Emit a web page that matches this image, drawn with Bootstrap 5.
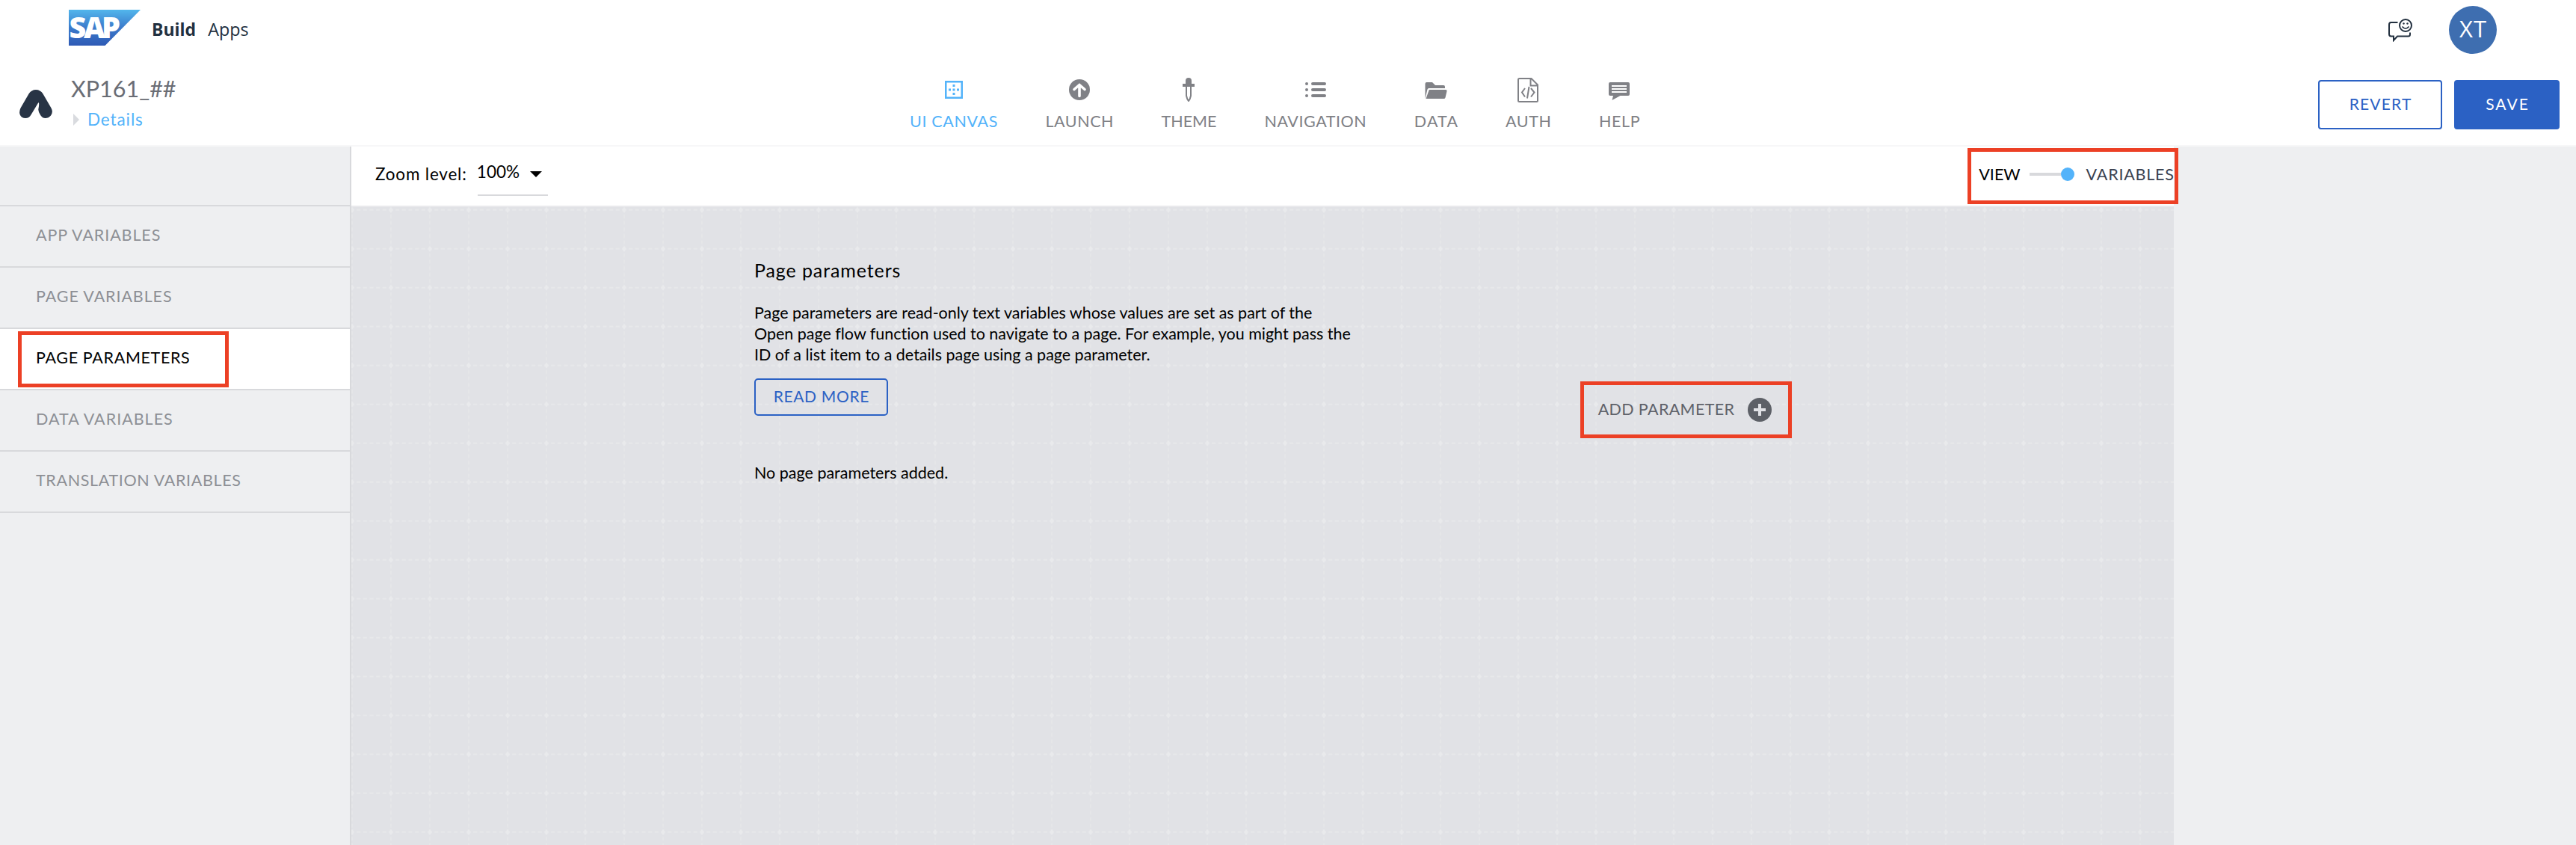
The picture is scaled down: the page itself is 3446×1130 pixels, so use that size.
<!DOCTYPE html>
<html lang="en">
<head>
<meta charset="utf-8">
<title>XP161_## - SAP Build Apps</title>
<link href="https://cdn.jsdelivr.net/npm/bootstrap@5.3.0/dist/css/bootstrap.min.css" rel="stylesheet">
<style>
  :root { --blue:#2b61c4; --sky:#53b3fa; --line:#d8d9dc; --panel:#eeeff1; --red:#ec4025; --ink:#22303f; }
  body { font-family: Lato, "Open Sans", sans-serif; font-size: 21.5px; line-height: 28px; color:#000; width:3446px; height:1130px; overflow:hidden; background:#fff; }
  svg { display:block; flex:none; }
  .t { white-space:nowrap; display:inline-block; letter-spacing:var(--ls,0); margin-right:calc(-1 * var(--ls,0px)); }
  .ls2 { --ls:.2px; } .ls4 { --ls:.35px; } .ls6 { --ls:.55px; } .ls7 { --ls:.65px; } .ls8 { --ls:.8px; } .ls9 { --ls:.9px; } .ls11 { --ls:1px; } .ls13 { --ls:1.2px; } .ls24 { --ls:2px; }
  .shellbar { height:80px; padding:0 106px 0 92px; color:var(--ink); font-family:"Open Sans", sans-serif; }
  .shellbar .logo { margin-top:-6px; overflow:visible; }
  .shellbar .product { font-size:23.3px; margin:0 0 2px 16px; }
  .shellbar .product.fw-bold { margin-left:15px; font-size:23px; }
  .avatar { width:64px; height:64px; background:#3e6eb0; font-size:31px; margin-left:48px; }
  .appbar { height:116px; border-bottom:2px solid #f7f7f8; padding-right:22px; }
  .brand { width:1217px; padding:0 0 0 26px; }
  .brand .mk { margin-top:40px; }
  .brand .names { margin:20px 0 0 25px; }
  .app-title { font-size:30.5px; line-height:36px; color:#6a6d75; }
  .details { font-size:22.5px; color:var(--sky); margin-top:10px; gap:11px; padding-left:3px; }
  .tools { gap:64px; padding-top:24px; }
  .tools a { color:#808186; text-decoration:none; }
  .tools a.on { color:var(--sky); }
  .tools .t { margin-top:12px; }
  .tools .tall { margin-bottom:-2px; }
  .acts { gap:16px; padding-top:27px; }
  .cta { --bs-btn-font-size:21px; --bs-btn-border-width:2px; --bs-btn-border-radius:4px; --bs-btn-padding-x:0; --bs-btn-padding-y:0; --bs-btn-color:var(--blue); --bs-btn-border-color:var(--blue); height:66px; width:166px; padding-bottom:2px; }
  .cta.fill { --bs-btn-color:#fff; --bs-btn-bg:var(--blue); width:141px; }
  .cta.more { height:50px; width:179px; --bs-btn-border-radius:5px; }
  .work { height:934px; }
  .side { width:470px; background:var(--panel); border-right:2px solid var(--line); }
  .side .blank { height:80px; border-bottom:2px solid var(--line); }
  .side .vitem { height:82px; border-bottom:2px solid var(--line); padding:0 0 4px 48px; color:#8d8f95; position:relative; }
  .side .vitem.on { background:#fff; color:#000; }
  .hot { position:absolute; border:5px solid var(--red); pointer-events:none; }
  .hot.h-side { left:24px; top:3px; width:282px; height:75px; }
  .hot.h-view { left:2162px; top:2px; width:282px; height:75px; z-index:2; }
  .hot.h-add { left:-24px; top:-22px; width:283px; height:76px; }
  .stagecol { width:2438px; position:relative; }
  .zoombar { height:80px; background:#fff; border-bottom:2px solid #f7f7f8; padding:0 0 4px 32px; font-size:22.5px; }
  .zoomsel { width:94px; height:66px; border-bottom:2px solid var(--line); margin-left:15px; padding-top:20px; }
  .zoomsel .t { margin-left:-1px; }
  .zoomsel svg { margin:13px 0 0 14px; }
  .mode { font-size:21.5px; }
  .track { width:42px; height:4px; background:var(--line); margin-left:12px; }
  .knob { width:18px; height:18px; background:var(--sky); margin-right:16px; }
  .mode .off { color:#3a4150; }
  .surface { height:854px; background:#e1e2e6; position:relative; }
  .surface .gridbg { position:absolute; inset:0; }
  .content { position:relative; width:1361px; margin-left:539px; padding-top:70px; }
  .content h1 { font-size:25px; line-height:30px; margin:0 0 28px; font-weight:400; }
  .content .para { letter-spacing:-.02px; }
  .content .actions { margin-top:18px; }
  .content p { margin:0; }
  .content p.none { margin-top:54px; }
  .add { color:#5f626a; gap:18px; height:32px; position:relative; margin-top:26px; }
  .add .t { padding-bottom:2px; }
  .rest { background:var(--panel); }
</style>
</head>
<body>
<header>
  <div class="shellbar d-flex align-items-center">
    <svg class="logo" width="96" height="48" viewBox="0 0 96 48">
      <defs><linearGradient id="sg" x1="0" y1="0" x2="0" y2="1"><stop offset="0" stop-color="#52b6ec"/><stop offset=".5" stop-color="#3b7bcb"/><stop offset="1" stop-color="#2e5ab5"/></linearGradient></defs>
      <path d="M0 0H96L48.500 48H0Z" fill="url(#sg)"/>
      <text x="0.500 20 44" y="38" font-family="Open Sans" font-weight="800" font-size="39.500" fill="#fff">SAP</text>
    </svg>
    <span class="product t fw-bold">Build</span>
    <span class="product t">Apps</span>
    <svg class="ms-auto" width="34" height="32" viewBox="0 0 34 32" fill="none" stroke="#22303f" stroke-width="2">
      <path d="M13.500 6H4.500Q2 6 2 9V21.500Q2 24.500 4.500 24.500H8V30L13 24.500H27.500Q30 24.500 30 22V19.500"/>
      <circle cx="24" cy="10" r="8"/><path d="M19.500 11.500Q24 17 28.500 11.500" stroke-width="1.700"/><circle cx="21.500" cy="7.500" r="1.200" fill="#22303f" stroke="none"/><circle cx="26.500" cy="7.500" r="1.200" fill="#22303f" stroke="none"/>
    </svg>
    <div class="avatar rounded-circle text-white d-flex align-items-center justify-content-center"><span class="t ls13 pb-1">XT</span></div>
  </div>

  <div class="appbar d-flex">
    <div class="brand d-flex">
      <svg class="mk" width="44" height="38" viewBox="0 0 44 38"><path d="M22 0Q28 0 31.500 5.500L42.500 24.500Q45.500 30 42 34.500Q39 38 34.500 38Q31 38 28.500 34.500Q24.500 29 25.500 25Q26.500 20 26 17.500Q25.500 17 25 17.800L15.500 33.500Q13 38 8 38Q3 38 1 34Q-1 30 1.500 24.500L12.500 5.500Q16 0 22 0Z" fill="#283445"/></svg>
      <div class="names">
        <div class="app-title"><span class="t">XP161_##</span></div>
        <div class="details d-flex align-items-center"><svg width="8" height="16"><path d="M0 0L8 8L0 16Z" fill="#d9dbdf"/></svg><span class="t ls9">Details</span></div>
      </div>
    </div>
    <nav class="tools d-flex">
      <a class="on d-flex flex-column align-items-center"><svg width="32" height="32" fill="currentColor"><path fill-rule="evenodd" d="M4 4H28V28H4ZM6.500 6.500V25.500H25.500V6.500Z"/><path d="M14.500 9h3v3h-3zM14.500 14.500h3v3h-3zM14.500 20h3v3h-3zM9 14.500h3v3h-3zM20 14.500h3v3h-3z"/></svg><span class="t ls7">UI CANVAS</span></a>
      <a class="d-flex flex-column align-items-center"><svg width="32" height="32"><circle cx="16" cy="16" r="14" fill="currentColor"/><path d="M16 24.500V10M9 15.500L16 9.500L23 15.500" fill="none" stroke="#fff" stroke-width="3.600" stroke-linecap="round"/></svg><span class="t ls6">LAUNCH</span></a>
      <a class="d-flex flex-column align-items-center"><svg width="32" height="32"><path d="M12 8V4Q12 0 16 0Q20 0 20 4V8H24V12H8V8Z" fill="currentColor"/><path d="M13 11V24Q14 29 16 31Q18 29 19 24V11" fill="none" stroke="currentColor" stroke-width="2"/></svg><span class="t">THEME</span></a>
      <a class="d-flex flex-column align-items-center"><svg width="32" height="32" stroke="currentColor" stroke-width="4" stroke-linecap="round"><path d="M4 8h.01M4 16h.01M4 24h.01M12 8H28M12 16H28M12 24H28"/></svg><span class="t ls6">NAVIGATION</span></a>
      <a class="d-flex flex-column align-items-center"><svg width="32" height="32" fill="currentColor"><path d="M1.500 28V8Q1.500 6 3.500 6H11L15 10H26Q28 10 28 12V14H6.500Q5 14 4.500 15.500Z"/><path d="M6.800 16H29Q31 16 30.500 18L28.500 26.500Q28 28 26.500 28H2.500Z"/></svg><span class="t ls13">DATA</span></a>
      <a class="d-flex flex-column align-items-center"><svg class="tall" width="32" height="34" fill="none" stroke="currentColor" stroke-width="2"><path d="M3 2.500Q3 1 4.500 1H20.500L29 9.500V30.500Q29 32 27.500 32H4.500Q3 32 3 30.500ZM19.500 1V10.500H29"/><path d="M12 14L8 19.500L12 25.500M20 14L24.500 19.500L20 25.500M17.500 12L15 27.500"/></svg><span class="t ls6">AUTH</span></a>
      <a class="d-flex flex-column align-items-center"><svg width="32" height="32"><path d="M4 6H28Q30 6 30 8V22Q30 24 28 24H17.500L6.500 30L8 24H4Q2 24 2 22V8Q2 6 4 6Z" fill="currentColor"/><path d="M6 11H26M6 15H26M6 19H26" stroke="#fff" stroke-width="2"/></svg><span class="t ls7">HELP</span></a>
    </nav>
    <div class="acts d-flex ms-auto">
      <button class="btn cta"><span class="t ls13">REVERT</span></button>
      <button class="btn cta fill"><span class="t ls24">SAVE</span></button>
    </div>
  </div>
</header>

<main class="work d-flex">
  <aside class="side flex-shrink-0">
    <div class="blank"></div>
    <div class="vitem d-flex align-items-center"><span class="t ls9">APP VARIABLES</span></div>
    <div class="vitem d-flex align-items-center"><span class="t ls9">PAGE VARIABLES</span></div>
    <div class="vitem on d-flex align-items-center"><span class="t ls7">PAGE PARAMETERS</span><i class="hot h-side"></i></div>
    <div class="vitem d-flex align-items-center"><span class="t ls11">DATA VARIABLES</span></div>
    <div class="vitem d-flex align-items-center"><span class="t ls7">TRANSLATION VARIABLES</span></div>
  </aside>

  <section class="stagecol flex-shrink-0">
    <div class="zoombar d-flex align-items-center">
      <span class="t ls8">Zoom level:</span>
      <div class="zoomsel align-self-start d-flex align-items-start"><span class="t">100%</span><svg width="16" height="8"><path d="M0 0H16L8 8Z"/></svg></div>
      <div class="mode ms-auto d-flex align-items-center">
        <span class="t">VIEW</span><span class="track"></span><span class="knob rounded-circle"></span><span class="t off ls8">VARIABLES</span>
      </div>
    </div>
    <i class="hot h-view"></i>
    <div class="surface">
      <svg class="gridbg" width="2438" height="854">
        <defs><pattern id="grid" x="1" y="4.700" width="52" height="52" patternUnits="userSpaceOnUse" patternTransform="translate(-26 -26)">
          <path d="M0 26H52" stroke="#e9eaec" stroke-width="1.500" stroke-dasharray="5 3.667" stroke-dashoffset="2.500"/>
          <path d="M26 0V52" stroke="#e6e7e9" stroke-width="1.500" stroke-dasharray="5 3.667" stroke-dashoffset="2.500"/>
          <path d="M26 22L29 26L26 30L23 26Z" fill="#e9eaec"/>
        </pattern></defs>
        <rect width="2438" height="854" fill="url(#grid)"/>
      </svg>
      <div class="content">
        <h1><span class="t ls9">Page parameters</span></h1>
        <p class="para">Page parameters are read-only text variables whose values are set as part of the<br>Open page flow function used to navigate to a page. For example, you might pass the<br>ID of a list item to a details page using a page parameter.</p>
        <div class="actions d-flex justify-content-between">
          <button class="btn cta more"><span class="t ls7">READ MORE</span></button>
          <div class="add d-flex align-items-center"><i class="hot h-add"></i><span class="t ls4">ADD PARAMETER</span>
            <svg width="32" height="32"><circle cx="16" cy="16" r="16" fill="#5d6067"/><path d="M16 8V24M8 16H24" stroke="#e1e2e6" stroke-width="4"/></svg></div>
        </div>
        <p class="none"><span class="t">No page parameters added.</span></p>
      </div>
    </div>
  </section>
  <aside class="rest flex-grow-1"></aside>
</main>
<script src="https://cdn.jsdelivr.net/npm/bootstrap@5.3.0/dist/js/bootstrap.bundle.min.js"></script>
</body>
</html>
